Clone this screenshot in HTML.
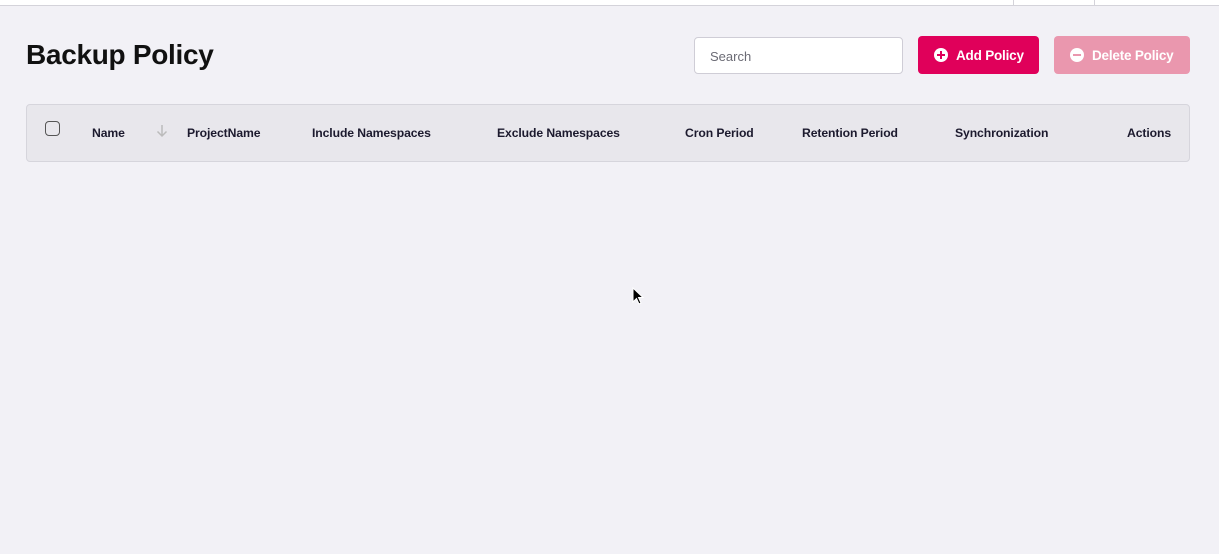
<!DOCTYPE html>
<html><head><style>
*{box-sizing:border-box;margin:0;padding:0}
body{width:1219px;height:554px;background:#f2f1f6;font-family:"Liberation Sans",sans-serif;position:relative;overflow:hidden}
.top{position:absolute;left:0;top:0;width:1219px;height:6px;background:#fff;border-bottom:1px solid #d4d3da}
.vl{position:absolute;top:0;width:1px;height:5px;background:#d4d3da}
h1{position:absolute;left:26px;top:39px;font-size:28px;font-weight:bold;color:#111;letter-spacing:-0.3px}
.search{position:absolute;left:694px;top:37px;width:209px;height:37px;background:#fff;border:1px solid #cfcdd6;border-radius:4px;font-size:13px;color:#6b6b75;padding:11px 15px}
.btn{position:absolute;top:36px;height:38px;border-radius:4px;color:#fff;font-size:13.5px;font-weight:bold;display:flex;align-items:center;padding-left:16px;letter-spacing:-0.2px}
.btn i{display:inline-block;width:14px;height:14px;border-radius:50%;background:#fff;margin-right:8px;position:relative}
.add{left:918px;width:121px;background:#e0005a}
.add i:before{content:"";position:absolute;left:3px;top:6px;width:8px;height:2px;background:#e0005a}
.add i:after{content:"";position:absolute;left:6px;top:3px;width:2px;height:8px;background:#e0005a}
.del{left:1054px;width:136px;background:#ea97ae}
.del i:before{content:"";position:absolute;left:3px;top:6px;width:8px;height:2px;background:#ea97ae}
.table{position:absolute;left:26px;top:104px;width:1164px;height:58px;background:#e8e7ec;border:1px solid #d6d5dc;border-radius:4px}
.th{position:absolute;top:21px;font-size:12.2px;font-weight:bold;color:#1c1a2e;letter-spacing:-0.1px}
.cb{position:absolute;left:18px;top:16px;width:15px;height:15px;border:1.5px solid #555;border-radius:4px}
.arr{position:absolute;left:129px;top:18px}
</style></head><body>
<div class="top"></div><div class="vl" style="left:1013px"></div><div class="vl" style="left:1094px"></div>
<h1>Backup Policy</h1>
<div class="search">Search</div>
<div class="btn add"><i></i>Add Policy</div>
<div class="btn del"><i></i>Delete Policy</div>
<div class="table">
<div class="cb"></div>
<div class="th" style="left:65px">Name</div>
<svg class="arr" width="12" height="16" viewBox="0 0 12 16"><path d="M6 2 V13 M1.5 8.5 L6 13 L10.5 8.5" fill="none" stroke="#bbb" stroke-width="1.5"/></svg>
<div class="th" style="left:160px">ProjectName</div>
<div class="th" style="left:285px">Include Namespaces</div>
<div class="th" style="left:470px">Exclude Namespaces</div>
<div class="th" style="left:658px">Cron Period</div>
<div class="th" style="left:775px">Retention Period</div>
<div class="th" style="left:928px">Synchronization</div>
<div class="th" style="left:1100px">Actions</div>
</div>
<svg style="position:absolute;left:632px;top:287px" width="12" height="19" viewBox="0 0 12 19"><path d="M1 1 L1 15 L4.5 11.5 L7 17 L9 16 L6.5 10.5 L11 10.5 Z" fill="#000" stroke="#fff" stroke-width="1"/></svg>
</body></html>
